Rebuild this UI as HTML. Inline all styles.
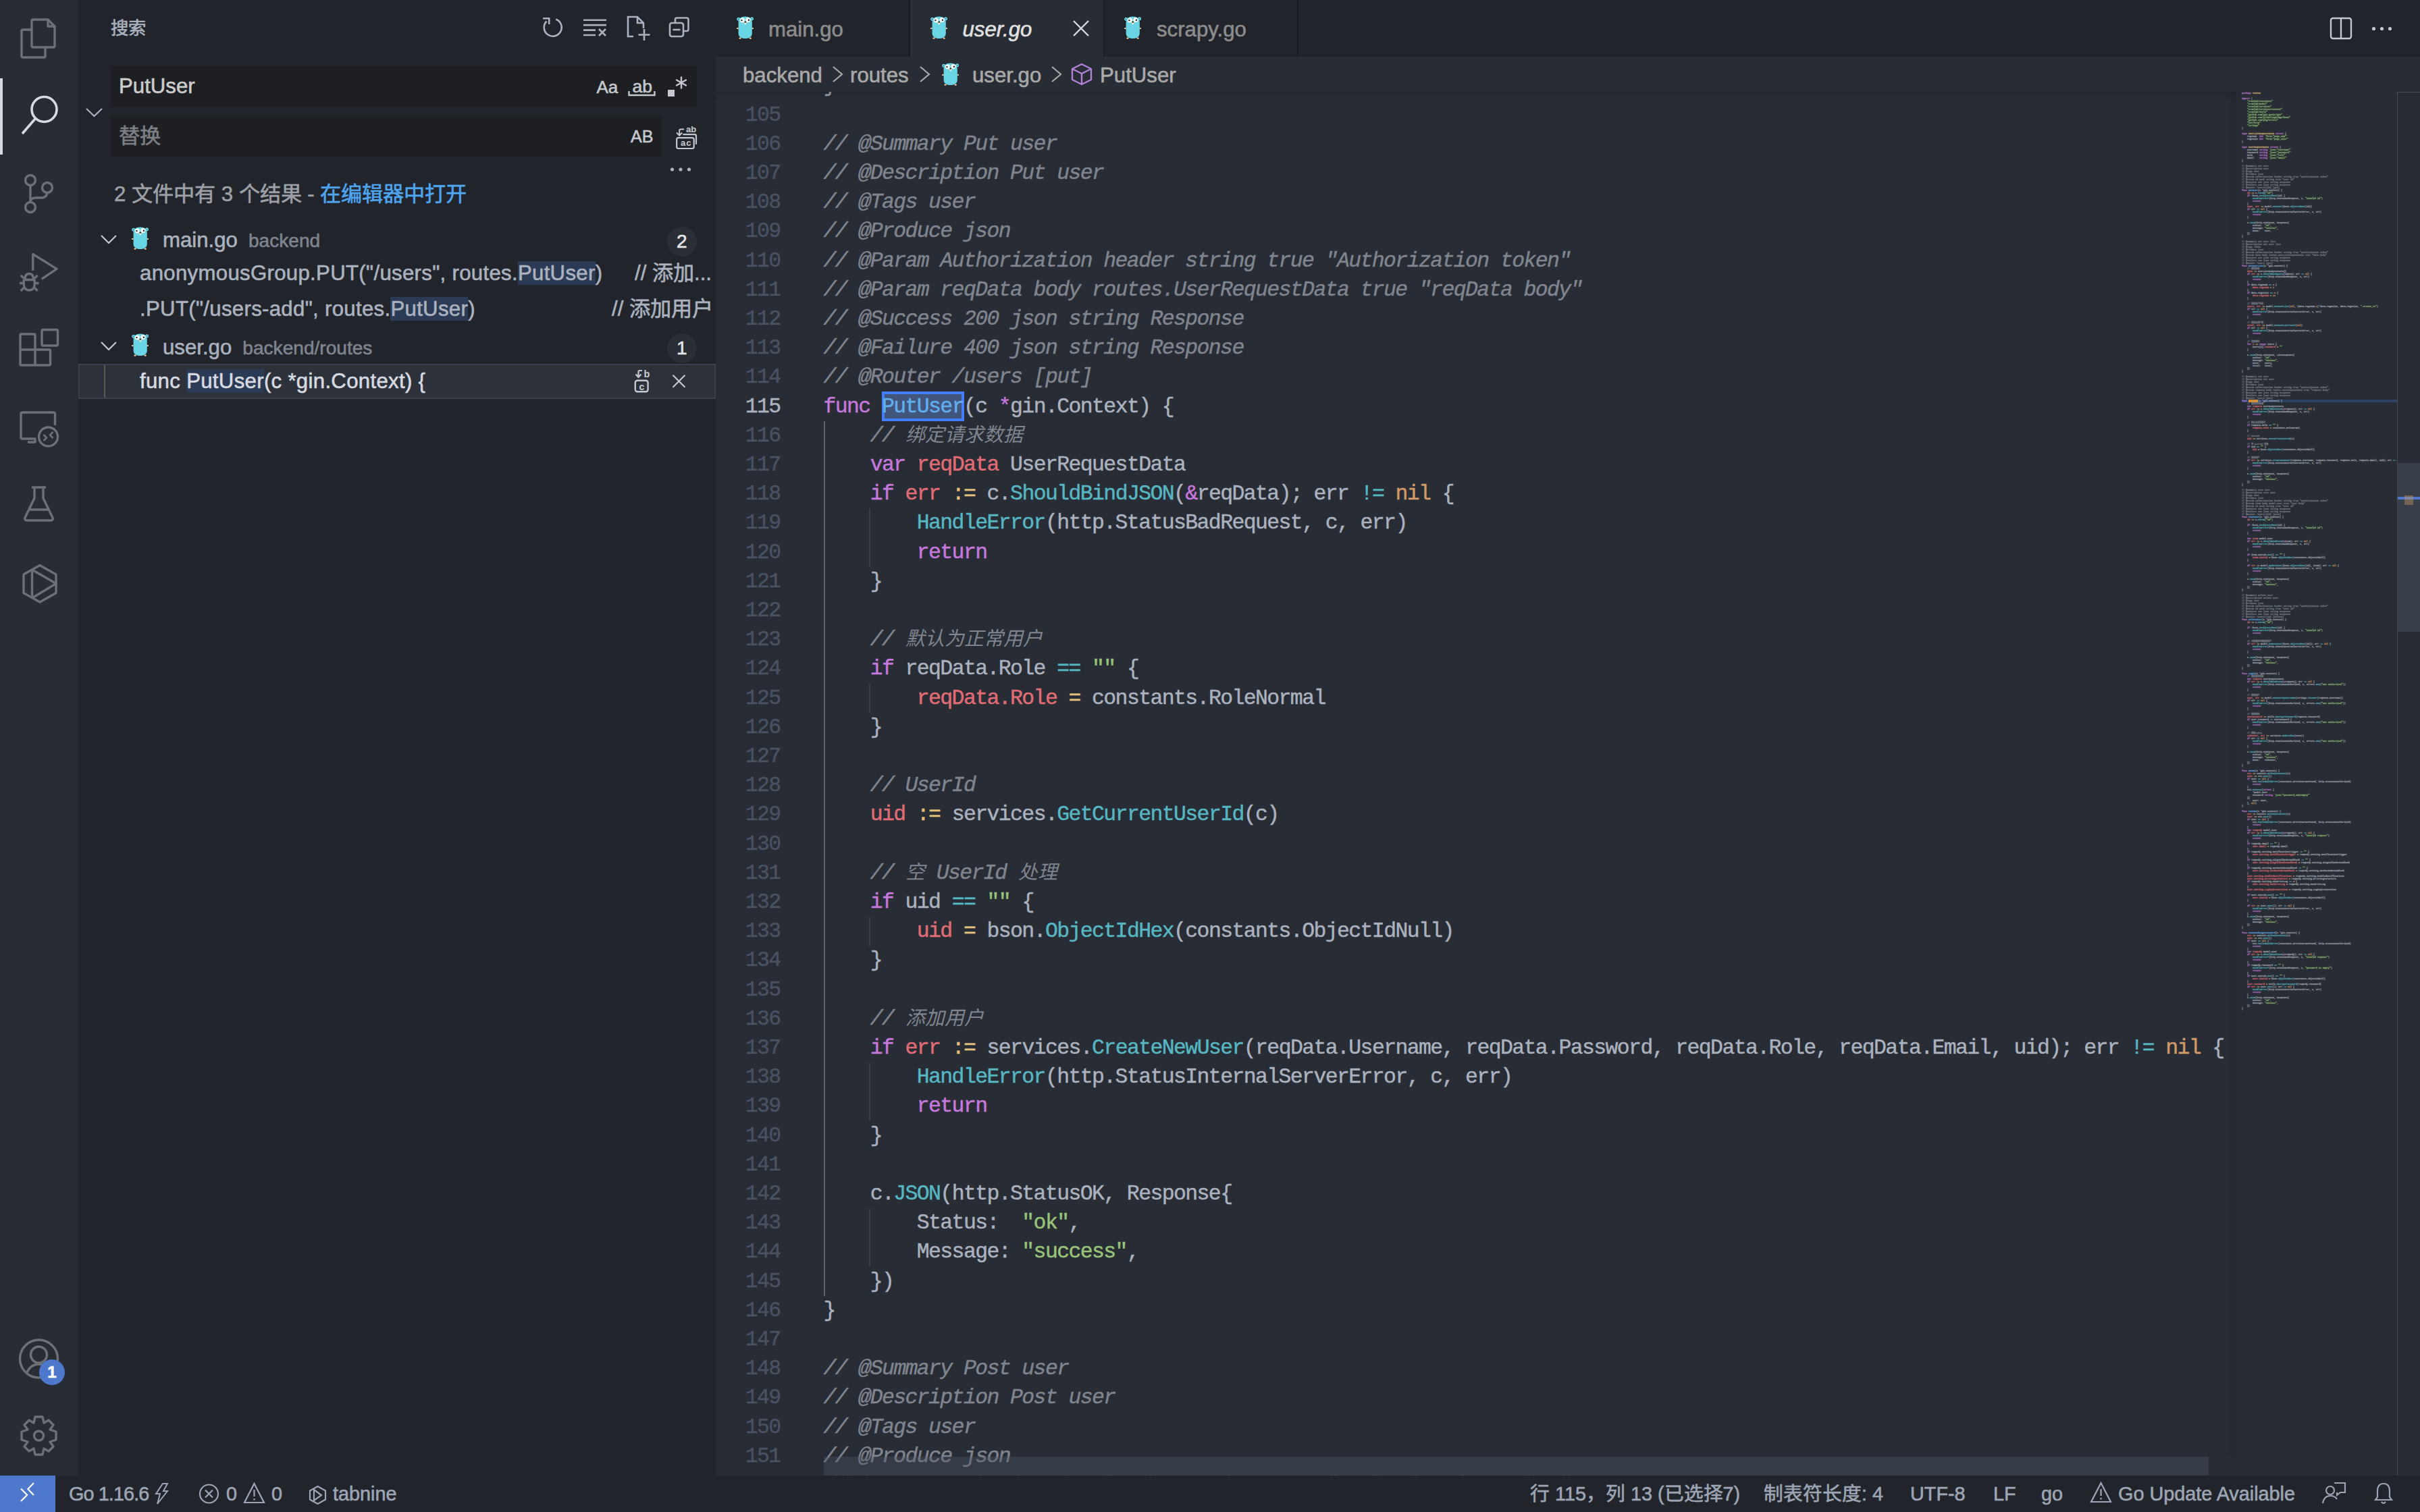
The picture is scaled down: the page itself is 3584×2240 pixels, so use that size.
<!DOCTYPE html>
<html lang="zh-CN"><head><meta charset="utf-8">
<style>
html,body{margin:0;padding:0;width:3584px;height:2240px;overflow:hidden;background:#282c34;font-family:"Liberation Sans",sans-serif;-webkit-text-stroke:0.6px}
.abs{position:absolute}
svg{display:block;overflow:visible}
#act{position:absolute;left:0;top:0;width:116px;height:2186px;background:#282c34}
#side{position:absolute;left:116px;top:0;width:944px;height:2186px;background:#21252b;overflow:hidden}
#tabs{position:absolute;left:1060px;top:0;width:2524px;height:84px;background:#21252b}
#crumbs{position:absolute;left:1060px;top:84px;width:2524px;height:52px;background:#282c34}
#editor{position:absolute;left:1060px;top:136px;width:2524px;height:2050px;background:#282c34;overflow:hidden}
#status{position:absolute;left:0;top:2186px;width:3584px;height:54px;background:#21252b;color:#9da5b4;font-size:28.8px}
.ln{position:absolute;left:1219.5px;height:43.2px;line-height:43.2px;font-family:"Liberation Mono",monospace;font-size:31.5px;letter-spacing:-1.62px;-webkit-text-stroke:0.45px;white-space:pre;color:#abb2bf}
.num{position:absolute;left:1060px;width:95.6px;text-align:right;height:43.2px;line-height:43.2px;font-family:"Liberation Mono",monospace;font-size:31.5px;letter-spacing:-1.62px;-webkit-text-stroke:0.45px;color:#495162}
.num.act{color:#abb2bf}
.ln i{color:#7f848e;font-style:italic}
.cj{font-size:28.8px;letter-spacing:0;-webkit-text-stroke:0}
.k{color:#c678dd}.v{color:#e06c75}.f{color:#56b6c2}.d{color:#61afef}.o{color:#56b6c2}.a{color:#e5c07b}.s{color:#98c379}.n{color:#d19a66}.y{color:#e5c07b}

.ig{position:absolute;width:2px;background:#3b4048}
.ig.act{background:#5c6270}
.tab{position:absolute;top:0;height:84px;width:286px;border-right:2px solid #181a1f;background:#21252b}
.tab .t{position:absolute;left:78px;top:2px;line-height:84px;font-size:31.2px;color:#8c8c8c}
.tab.active{background:#282c34}
.tab.active .t{color:#e0e0e0;font-style:italic}
.crumb{position:absolute;top:86px;height:52px;line-height:52px;font-size:31.2px;color:#a9a9a9}
.sb{position:absolute;top:2186px;height:54px;line-height:54px;font-size:28.8px;color:#9da5b4;white-space:nowrap}
.tree{position:absolute;height:52.8px;line-height:52.8px;font-size:31.2px;color:#abb2bf;white-space:pre}
.tree.code{letter-spacing:0.3px}
.desc{color:#7f848e;font-size:28.1px;margin-left:16px}
.mh{background:#2b3a55}
.mm{font-family:"Liberation Mono",monospace;font-size:3.333px;line-height:4px;white-space:pre;color:#abb2bf;-webkit-text-stroke:0.3px;opacity:0.75}
.mm .c{color:#7f848e}
.badge{position:absolute;width:44px;height:44px;border-radius:22px;background:#2a2e36;color:#e6e6e6;font-size:28px;line-height:44px;text-align:center}
</style></head><body>

<!-- ACTIVITY BAR -->
<div id="act">
<svg class="abs" style="left:0;top:0" width="116" height="2186" viewBox="0 0 116 2186" fill="none" stroke="#6c7079" stroke-width="3.4" stroke-linejoin="round">
 <!-- explorer -->
 <path d="M49 29 H71 L81 39 V68 Q81 70 79 70 H49 Q47 70 47 68 V31 Q47 29 49 29 Z"/>
 <path d="M71 29 V39 H81"/>
 <path d="M47 44 H34 Q32 44 32 46 V83 Q32 85 34 85 H65 Q67 85 67 83 V70"/>
 <!-- search (active) -->
 <g stroke="#d7dae0" stroke-width="3.6">
 <circle cx="65.5" cy="162" r="18.5"/>
 <path d="M52.5 175.5 L33 198"/>
 </g>
 <rect x="0" y="116" width="4" height="113" fill="#d7dae0" stroke="none"/>
 <!-- scm -->
 <circle cx="45" cy="267" r="7.5"/>
 <circle cx="45" cy="307" r="7.5"/>
 <circle cx="70" cy="278" r="7.5"/>
 <path d="M45 274.5 V299.5"/>
 <path d="M70 285.5 Q69 293 61 293 H53 Q45 293 45 299.5"/>
 <!-- run & debug -->
 <path d="M48.8 400.7 V376.5 L84 398.4 L61.8 413.4"/>
 <path d="M37 413.5 Q37 405.5 43.2 405.5 Q49.4 405.5 49.4 413.5 M34.5 414.5 H52 M35.2 414.5 V421 Q35.2 430 43.2 430 Q51.2 430 51.2 421 V414.5"/>
 <path d="M30.8 408 L35.5 412.5 M55.6 408 L50.9 412.5 M29 419.5 H34.5 M52 419.5 H57.5 M30.8 431 L35.3 426.2 M55.6 431 L51.1 426.2"/>
 <!-- extensions -->
 <path d="M31.5 495 H50.5 Q52 495 52 496.5 V518 H73 Q74.5 518 74.5 519.5 V539.5 Q74.5 541 73 541 H31.5 Q30 541 30 539.5 V496.5 Q30 495 31.5 495 Z"/>
 <path d="M30 518 H52 V541"/>
 <rect x="62" y="488.5" width="23.5" height="23.5" rx="2"/>
 <!-- remote -->
 <path d="M81.5 630 V613 Q81.5 611 79.5 611 H33 Q31 611 31 613 V648 Q31 650 33 650 H52 V655 H41"/>
 <circle cx="71.5" cy="647" r="14"/>
 <path d="M64.5 644 L69 648.5 L64.5 653 M78.5 640 L74 644.5 L78.5 649" stroke-width="2.6"/>
 <!-- testing -->
 <path d="M47 722 H68 M51 722 V738 L37 767 Q36 771 40 771 H75 Q79 771 78 767 L64 738 V722 M43 755 H72"/>
 <!-- hexagon play -->
 <path d="M59 837.5 L83 851 V878.5 L59 892 L35 878.5 V851 Z"/>
 <path d="M47.5 844 V886 M47.5 844 L83 864.5 L47.5 886"/>
 <!-- account -->
 <circle cx="57.5" cy="2013" r="28"/>
 <circle cx="57.5" cy="2007" r="12"/>
 <path d="M40 2033 Q46 2021 57.5 2021 Q69 2021 75 2033"/>
 <!-- gear -->
 <path d="M52 2099 H63 L65 2108 L72 2104 L79 2111 L74 2118 L83 2121 V2133 L74 2136 L79 2143 L72 2150 L65 2146 L63 2155 H52 L50 2146 L43 2150 L36 2143 L41 2136 L32 2133 V2121 L41 2118 L36 2111 L43 2104 L50 2108 Z"/>
 <circle cx="57.5" cy="2127" r="7"/>
</svg>
<div class="abs" style="left:58px;top:2014px;width:38px;height:38px;border-radius:19px;background:#4d78cc;color:#fff;font-weight:bold;font-size:24px;line-height:38px;text-align:center">1</div>
</div>

<!-- SIDEBAR -->
<div id="side">
 <div class="abs" style="left:48px;top:0;line-height:84px;font-size:26.4px;color:#abb2bf">搜索</div>
 <div class="abs" style="left:48px;top:98px;width:868px;height:60px;background:#1d1f23"></div>
 <div class="abs" style="left:60px;top:98px;line-height:60px;font-size:31.2px;color:#cccccc">PutUser</div>
 <div class="abs" style="left:767.5px;top:99px;line-height:60px;font-size:26px;color:#c5c8ce">Aa</div>
 <div class="abs" style="left:820.5px;top:97.5px;line-height:60px;font-size:26.5px;color:#c5c8ce">ab</div>
 <div class="abs" style="left:872.5px;top:133px;width:10px;height:10px;background:#c5c8ce"></div>
  <div class="abs" style="left:48px;top:172px;width:816px;height:60px;background:#1d1f23"></div>
 <div class="abs" style="left:60px;top:172px;line-height:60px;font-size:31.2px;color:#7d7f84">替换</div>
 <div class="abs" style="left:818px;top:172px;line-height:60px;font-size:25px;color:#c5c8ce">AB</div>
 <div class="abs" style="left:53px;top:262px;line-height:52px;font-size:31.2px;color:#9da0a6;white-space:pre">2 文件中有 3 个结果 - <span style="color:#4fa6ef">在编辑器中打开</span></div>
 <svg class="abs" style="left:0;top:0" width="944" height="700" viewBox="116 0 944 700" fill="none" stroke="#abb2bf" stroke-width="2.6">
  <!-- refresh -->
  <path d="M823.3 28.5 A13 13 0 1 1 809.5 31.5"/>
  <path d="M804.1 27.2 H813.2 V36" stroke-linejoin="miter"/>
  <path d="M1009 113.5 V131.5 M1001.2 118 L1016.8 127 M1016.8 118 L1001.2 127" stroke="#c5c8ce" stroke-width="2.4"/>
  <!-- clear -->
  <path d="M864 29.8 H898 M864 37.1 H898 M864 44.6 H882 M864 52 H882 M887 43 L897 53 M897 43 L887 53"/>
  <!-- new search editor -->
  <path d="M938 54 H930 V25 H944 L953 34 V42 M944 25 V34 H953 M954 43 V60 M945.5 51.5 H962.5"/>
  <!-- collapse all -->
  <rect x="992" y="34" width="20" height="20" rx="3"/>
  <path d="M1000 34 V29 Q1000 26.5 1002.5 26.5 H1017 Q1019.5 26.5 1019.5 29 V43.5 Q1019.5 46 1017 46 H1012"/>
  <path d="M996.5 44 H1007.5"/>
  <!-- toggle chevron -->
  <path d="M128 161 L139.5 172 L151 161" stroke-width="2.2"/>
  <g stroke="#c5c8ce">
  <!-- ab underline -->
  <path d="M931.5 135 V141 H969.5 V135" stroke-width="2.4"/>
  <!-- replace all -->
  <rect x="1002.2" y="204.1" width="25.5" height="15.9" rx="2.5" stroke-width="2.2"/>
  <path d="M1011.2 199.2 H1029 Q1031 199.2 1031 201.2 V213.7" stroke-width="2.2"/>
  <path d="M1013.1 191.6 H1008.2 Q1006.2 191.6 1006.2 193.6 V200 M1002 196.5 L1006.2 200.8 L1010.2 196.5" stroke-width="2"/>
  <!-- more dots -->
  <g fill="#abb2bf" stroke="none"><circle cx="995.5" cy="251" r="2.6"/><circle cx="1008" cy="251" r="2.6"/><circle cx="1020.5" cy="251" r="2.6"/></g>
  </g>
 </svg>
 <div class="abs" style="left:900px;top:185px;line-height:14px;font-size:13px;font-weight:bold;-webkit-text-stroke:0.1px;color:#c5c8ce">ab</div>
 <div class="abs" style="left:892px;top:205px;line-height:14px;font-size:13px;font-weight:bold;-webkit-text-stroke:0.1px;color:#c5c8ce;letter-spacing:1px">ac</div>

 <!-- tree -->
 <svg class="abs" style="left:0;top:0" width="944" height="700" viewBox="116 0 944 700" fill="none" stroke="#c5c8ce" stroke-width="2.2">
  <path d="M150 349 L161 360 L172 349"/>
  <path d="M150 507 L161 518 L172 507"/>
 </svg>
 <div class="abs" style="left:78.9px;top:336px;width:24px;height:34px"><svg viewBox="0 0 24 34" width="24" height="34">
<circle cx="2.7" cy="4.2" r="2.5" fill="#6ad6e5"/><circle cx="22.6" cy="3.8" r="2.5" fill="#6ad6e5"/>
<circle cx="2.4" cy="4.2" r="0.7" fill="#1b3a40"/><circle cx="22.9" cy="3.8" r="0.7" fill="#1b3a40"/>
<ellipse cx="1.4" cy="18.1" rx="1.5" ry="1.1" fill="#f3d0a0"/><ellipse cx="23.6" cy="18.1" rx="1.5" ry="1.1" fill="#f3d0a0"/>
<ellipse cx="5" cy="32.6" rx="1.7" ry="1.2" fill="#f3d0a0"/><ellipse cx="20.2" cy="32.6" rx="1.7" ry="1.2" fill="#f3d0a0"/>
<path d="M12.6 0.6 C19 0.6 22.8 3.6 22.8 9.5 V25 C22.8 30.5 18.8 33 12.6 33 C6.4 33 2.6 30.5 2.6 25 V9.5 C2.6 3.6 6.2 0.6 12.6 0.6 Z" fill="#6ad6e5"/>
<circle cx="8.4" cy="5.9" r="3.5" fill="#fff"/><circle cx="16.9" cy="5.6" r="3.5" fill="#fff"/>
<circle cx="7.4" cy="6.1" r="1.2" fill="#222"/><circle cx="17.9" cy="5.8" r="1.2" fill="#222"/>
<ellipse cx="12.8" cy="9.9" rx="2.2" ry="1.1" fill="#f3d0a0"/><ellipse cx="12.8" cy="8.5" rx="1.3" ry="0.95" fill="#111"/>
<rect x="12" y="10.8" width="1.7" height="1.5" fill="#fff"/>
</svg></div>
 <div class="tree" style="left:125px;top:330px">main.go<span class="desc">backend</span></div>
 <div class="badge" style="left:871.7px;top:336px">2</div>
 <div class="tree code" style="left:91px;top:379.4px">anonymousGroup.PUT("/users", routes.<span class="mh">PutUser</span>)</div>
 <div class="tree" style="left:824px;top:379.4px">// 添加...</div>
 <div class="tree code" style="left:91px;top:432.2px">.PUT("/users-add", routes.<span class="mh">PutUser</span>)</div>
 <div class="tree" style="left:790px;top:432.2px">// 添加用户</div>
 <div class="abs" style="left:78.9px;top:493.5px;width:24px;height:34px"><svg viewBox="0 0 24 34" width="24" height="34">
<circle cx="2.7" cy="4.2" r="2.5" fill="#6ad6e5"/><circle cx="22.6" cy="3.8" r="2.5" fill="#6ad6e5"/>
<circle cx="2.4" cy="4.2" r="0.7" fill="#1b3a40"/><circle cx="22.9" cy="3.8" r="0.7" fill="#1b3a40"/>
<ellipse cx="1.4" cy="18.1" rx="1.5" ry="1.1" fill="#f3d0a0"/><ellipse cx="23.6" cy="18.1" rx="1.5" ry="1.1" fill="#f3d0a0"/>
<ellipse cx="5" cy="32.6" rx="1.7" ry="1.2" fill="#f3d0a0"/><ellipse cx="20.2" cy="32.6" rx="1.7" ry="1.2" fill="#f3d0a0"/>
<path d="M12.6 0.6 C19 0.6 22.8 3.6 22.8 9.5 V25 C22.8 30.5 18.8 33 12.6 33 C6.4 33 2.6 30.5 2.6 25 V9.5 C2.6 3.6 6.2 0.6 12.6 0.6 Z" fill="#6ad6e5"/>
<circle cx="8.4" cy="5.9" r="3.5" fill="#fff"/><circle cx="16.9" cy="5.6" r="3.5" fill="#fff"/>
<circle cx="7.4" cy="6.1" r="1.2" fill="#222"/><circle cx="17.9" cy="5.8" r="1.2" fill="#222"/>
<ellipse cx="12.8" cy="9.9" rx="2.2" ry="1.1" fill="#f3d0a0"/><ellipse cx="12.8" cy="8.5" rx="1.3" ry="0.95" fill="#111"/>
<rect x="12" y="10.8" width="1.7" height="1.5" fill="#fff"/>
</svg></div>
 <div class="tree" style="left:125px;top:488.5px">user.go<span class="desc">backend/routes</span></div>
 <div class="badge" style="left:871.7px;top:493.5px">1</div>
 <div class="abs" style="left:0;top:538.8px;width:940px;height:48.6px;background:#2c313a;border:2px solid #3a3f4b"></div>
 <div class="abs" style="left:38px;top:540.8px;width:2px;height:48.6px;background:#5a5a52"></div>
 <div class="tree code" style="left:91px;top:538.8px;color:#d7dae0">func <span class="mh">PutUser</span>(c *gin.Context) {</div>
 <svg class="abs" style="left:0;top:0" width="944" height="700" viewBox="116 0 944 700" fill="none" stroke="#c5c8ce" stroke-width="2.4">
  <rect x="940.8" y="563.7" width="18.8" height="16.6" rx="3"/>
  <path d="M951 549 H947 Q945.5 549 945.5 550.5 V558.5 M941.5 554.5 L945.5 558.8 L949.5 554.5" stroke-width="2.2"/>
  <path d="M996.5 555.8 L1014.5 573.8 M1014.5 555.8 L996.5 573.8" stroke-width="2.2"/>
 </svg>
 <div class="abs" style="left:837.5px;top:548px;line-height:12px;font-size:14.5px;font-weight:bold;-webkit-text-stroke:0.1px;color:#c5c8ce">b</div>
 <div class="abs" style="left:830.5px;top:566px;line-height:14px;font-size:14px;font-weight:bold;-webkit-text-stroke:0.1px;color:#c5c8ce">c</div>
</div>

<!-- TABS -->
<div id="tabs">
 <div class="tab" style="left:0"><div class="t">main.go</div></div>
 <div class="tab active" style="left:287.5px"><div class="t">user.go</div></div>
 <div class="tab" style="left:575px"><div class="t">scrapy.go</div></div>
 <svg class="abs" style="left:0;top:0" width="2524" height="84" viewBox="1060 0 2524 84" fill="none" stroke="#d7dae0" stroke-width="2.4">
  <path d="M1590 31 L1612 53 M1612 31 L1590 53"/>
  <rect x="3452" y="27" width="30" height="30" rx="3" stroke="#c5c8ce"/>
  <path d="M3467 27 V57" stroke="#c5c8ce"/>
  <g fill="#c5c8ce" stroke="none"><circle cx="3515.5" cy="42.5" r="2.6"/><circle cx="3527.5" cy="42.5" r="2.6"/><circle cx="3539.5" cy="42.5" r="2.6"/></g>
 </svg>
</div>
<div class="abs" style="left:1090.8px;top:23.9px;width:24px;height:34px"><svg viewBox="0 0 24 34" width="24" height="34">
<circle cx="2.7" cy="4.2" r="2.5" fill="#6ad6e5"/><circle cx="22.6" cy="3.8" r="2.5" fill="#6ad6e5"/>
<circle cx="2.4" cy="4.2" r="0.7" fill="#1b3a40"/><circle cx="22.9" cy="3.8" r="0.7" fill="#1b3a40"/>
<ellipse cx="1.4" cy="18.1" rx="1.5" ry="1.1" fill="#f3d0a0"/><ellipse cx="23.6" cy="18.1" rx="1.5" ry="1.1" fill="#f3d0a0"/>
<ellipse cx="5" cy="32.6" rx="1.7" ry="1.2" fill="#f3d0a0"/><ellipse cx="20.2" cy="32.6" rx="1.7" ry="1.2" fill="#f3d0a0"/>
<path d="M12.6 0.6 C19 0.6 22.8 3.6 22.8 9.5 V25 C22.8 30.5 18.8 33 12.6 33 C6.4 33 2.6 30.5 2.6 25 V9.5 C2.6 3.6 6.2 0.6 12.6 0.6 Z" fill="#6ad6e5"/>
<circle cx="8.4" cy="5.9" r="3.5" fill="#fff"/><circle cx="16.9" cy="5.6" r="3.5" fill="#fff"/>
<circle cx="7.4" cy="6.1" r="1.2" fill="#222"/><circle cx="17.9" cy="5.8" r="1.2" fill="#222"/>
<ellipse cx="12.8" cy="9.9" rx="2.2" ry="1.1" fill="#f3d0a0"/><ellipse cx="12.8" cy="8.5" rx="1.3" ry="0.95" fill="#111"/>
<rect x="12" y="10.8" width="1.7" height="1.5" fill="#fff"/>
</svg></div>
<div class="abs" style="left:1377.8px;top:23.9px;width:24px;height:34px"><svg viewBox="0 0 24 34" width="24" height="34">
<circle cx="2.7" cy="4.2" r="2.5" fill="#6ad6e5"/><circle cx="22.6" cy="3.8" r="2.5" fill="#6ad6e5"/>
<circle cx="2.4" cy="4.2" r="0.7" fill="#1b3a40"/><circle cx="22.9" cy="3.8" r="0.7" fill="#1b3a40"/>
<ellipse cx="1.4" cy="18.1" rx="1.5" ry="1.1" fill="#f3d0a0"/><ellipse cx="23.6" cy="18.1" rx="1.5" ry="1.1" fill="#f3d0a0"/>
<ellipse cx="5" cy="32.6" rx="1.7" ry="1.2" fill="#f3d0a0"/><ellipse cx="20.2" cy="32.6" rx="1.7" ry="1.2" fill="#f3d0a0"/>
<path d="M12.6 0.6 C19 0.6 22.8 3.6 22.8 9.5 V25 C22.8 30.5 18.8 33 12.6 33 C6.4 33 2.6 30.5 2.6 25 V9.5 C2.6 3.6 6.2 0.6 12.6 0.6 Z" fill="#6ad6e5"/>
<circle cx="8.4" cy="5.9" r="3.5" fill="#fff"/><circle cx="16.9" cy="5.6" r="3.5" fill="#fff"/>
<circle cx="7.4" cy="6.1" r="1.2" fill="#222"/><circle cx="17.9" cy="5.8" r="1.2" fill="#222"/>
<ellipse cx="12.8" cy="9.9" rx="2.2" ry="1.1" fill="#f3d0a0"/><ellipse cx="12.8" cy="8.5" rx="1.3" ry="0.95" fill="#111"/>
<rect x="12" y="10.8" width="1.7" height="1.5" fill="#fff"/>
</svg></div>
<div class="abs" style="left:1664.8px;top:23.9px;width:24px;height:34px"><svg viewBox="0 0 24 34" width="24" height="34">
<circle cx="2.7" cy="4.2" r="2.5" fill="#6ad6e5"/><circle cx="22.6" cy="3.8" r="2.5" fill="#6ad6e5"/>
<circle cx="2.4" cy="4.2" r="0.7" fill="#1b3a40"/><circle cx="22.9" cy="3.8" r="0.7" fill="#1b3a40"/>
<ellipse cx="1.4" cy="18.1" rx="1.5" ry="1.1" fill="#f3d0a0"/><ellipse cx="23.6" cy="18.1" rx="1.5" ry="1.1" fill="#f3d0a0"/>
<ellipse cx="5" cy="32.6" rx="1.7" ry="1.2" fill="#f3d0a0"/><ellipse cx="20.2" cy="32.6" rx="1.7" ry="1.2" fill="#f3d0a0"/>
<path d="M12.6 0.6 C19 0.6 22.8 3.6 22.8 9.5 V25 C22.8 30.5 18.8 33 12.6 33 C6.4 33 2.6 30.5 2.6 25 V9.5 C2.6 3.6 6.2 0.6 12.6 0.6 Z" fill="#6ad6e5"/>
<circle cx="8.4" cy="5.9" r="3.5" fill="#fff"/><circle cx="16.9" cy="5.6" r="3.5" fill="#fff"/>
<circle cx="7.4" cy="6.1" r="1.2" fill="#222"/><circle cx="17.9" cy="5.8" r="1.2" fill="#222"/>
<ellipse cx="12.8" cy="9.9" rx="2.2" ry="1.1" fill="#f3d0a0"/><ellipse cx="12.8" cy="8.5" rx="1.3" ry="0.95" fill="#111"/>
<rect x="12" y="10.8" width="1.7" height="1.5" fill="#fff"/>
</svg></div>

<!-- BREADCRUMBS -->
<div id="crumbs"></div>
<div class="crumb" style="left:1100px">backend</div>
<div class="crumb" style="left:1259px">routes</div>
<div class="abs" style="left:1395px;top:92.6px;width:24px;height:34px"><svg viewBox="0 0 24 34" width="24" height="34">
<circle cx="2.7" cy="4.2" r="2.5" fill="#6ad6e5"/><circle cx="22.6" cy="3.8" r="2.5" fill="#6ad6e5"/>
<circle cx="2.4" cy="4.2" r="0.7" fill="#1b3a40"/><circle cx="22.9" cy="3.8" r="0.7" fill="#1b3a40"/>
<ellipse cx="1.4" cy="18.1" rx="1.5" ry="1.1" fill="#f3d0a0"/><ellipse cx="23.6" cy="18.1" rx="1.5" ry="1.1" fill="#f3d0a0"/>
<ellipse cx="5" cy="32.6" rx="1.7" ry="1.2" fill="#f3d0a0"/><ellipse cx="20.2" cy="32.6" rx="1.7" ry="1.2" fill="#f3d0a0"/>
<path d="M12.6 0.6 C19 0.6 22.8 3.6 22.8 9.5 V25 C22.8 30.5 18.8 33 12.6 33 C6.4 33 2.6 30.5 2.6 25 V9.5 C2.6 3.6 6.2 0.6 12.6 0.6 Z" fill="#6ad6e5"/>
<circle cx="8.4" cy="5.9" r="3.5" fill="#fff"/><circle cx="16.9" cy="5.6" r="3.5" fill="#fff"/>
<circle cx="7.4" cy="6.1" r="1.2" fill="#222"/><circle cx="17.9" cy="5.8" r="1.2" fill="#222"/>
<ellipse cx="12.8" cy="9.9" rx="2.2" ry="1.1" fill="#f3d0a0"/><ellipse cx="12.8" cy="8.5" rx="1.3" ry="0.95" fill="#111"/>
<rect x="12" y="10.8" width="1.7" height="1.5" fill="#fff"/>
</svg></div>
<div class="crumb" style="left:1440px">user.go</div>
<div class="crumb" style="left:1629px">PutUser</div>
<svg class="abs" style="left:0;top:0" width="3584" height="140" fill="none" stroke="#a9a9a9" stroke-width="2.2">
 <path d="M1234 99 L1247 110 L1234 121 M1363 99 L1376 110 L1363 121 M1558 99 L1571 110 L1558 121"/>
 <g stroke="#b180d7" stroke-width="2.4" stroke-linejoin="round"><path d="M1602 95 L1616 102 V118 L1602 125 L1588 118 V102 Z M1588 102 L1602 109 L1616 102 M1602 109 V125"/></g>
</svg>

<!-- EDITOR -->
<div id="editor"></div>
<div class="abs" style="left:1060px;top:136px;width:2252px;height:2050px;overflow:hidden">
 <div class="abs" style="left:-1060px;top:-136px;width:3584px;height:2240px">
<div class="abs" style="left:1306px;top:580px;width:122px;height:44px;box-sizing:border-box;background:#42557b;border:4px solid #457dff"></div>
<div class="ig act" style="left:1219.5px;top:623.7px;height:1296.0px"></div>
<div class="ig" style="left:1287.4px;top:753.3px;height:86.4px"></div>
<div class="ig" style="left:1287.4px;top:1012.5px;height:43.2px"></div>
<div class="ig" style="left:1287.4px;top:1358.1px;height:43.2px"></div>
<div class="ig" style="left:1287.4px;top:1574.1px;height:86.4px"></div>
<div class="ig" style="left:1287.4px;top:1790.1px;height:86.4px"></div>
<div class="ln" style="top:105.3px">}</div>
<div class="num" style="top:105.3px">104</div>
<div class="ln" style="top:148.5px"></div>
<div class="num" style="top:148.5px">105</div>
<div class="ln" style="top:191.7px"><i>// @Summary Put user</i></div>
<div class="num" style="top:191.7px">106</div>
<div class="ln" style="top:234.9px"><i>// @Description Put user</i></div>
<div class="num" style="top:234.9px">107</div>
<div class="ln" style="top:278.1px"><i>// @Tags user</i></div>
<div class="num" style="top:278.1px">108</div>
<div class="ln" style="top:321.3px"><i>// @Produce json</i></div>
<div class="num" style="top:321.3px">109</div>
<div class="ln" style="top:364.5px"><i>// @Param Authorization header string true &quot;Authorization token&quot;</i></div>
<div class="num" style="top:364.5px">110</div>
<div class="ln" style="top:407.7px"><i>// @Param reqData body routes.UserRequestData true &quot;reqData body&quot;</i></div>
<div class="num" style="top:407.7px">111</div>
<div class="ln" style="top:450.9px"><i>// @Success 200 json string Response</i></div>
<div class="num" style="top:450.9px">112</div>
<div class="ln" style="top:494.1px"><i>// @Failure 400 json string Response</i></div>
<div class="num" style="top:494.1px">113</div>
<div class="ln" style="top:537.3px"><i>// @Router /users [put]</i></div>
<div class="num" style="top:537.3px">114</div>
<div class="ln" style="top:580.5px"><span class="k">func</span> <span class="d sel">PutUser</span>(c <span class="k">*</span>gin.Context) {</div>
<div class="num act" style="top:580.5px">115</div>
<div class="ln" style="top:623.7px">    <i>// <span class="cj">绑定请求数据</span></i></div>
<div class="num" style="top:623.7px">116</div>
<div class="ln" style="top:666.9px">    <span class="k">var</span> <span class="v">reqData</span> UserRequestData</div>
<div class="num" style="top:666.9px">117</div>
<div class="ln" style="top:710.1px">    <span class="k">if</span> <span class="v">err</span> <span class="a">:=</span> c.<span class="f">ShouldBindJSON</span>(<span class="k">&amp;</span>reqData); err <span class="o">!=</span> <span class="n">nil</span> {</div>
<div class="num" style="top:710.1px">118</div>
<div class="ln" style="top:753.3px">        <span class="f">HandleError</span>(http.StatusBadRequest, c, err)</div>
<div class="num" style="top:753.3px">119</div>
<div class="ln" style="top:796.5px">        <span class="k">return</span></div>
<div class="num" style="top:796.5px">120</div>
<div class="ln" style="top:839.7px">    }</div>
<div class="num" style="top:839.7px">121</div>
<div class="ln" style="top:882.9px"></div>
<div class="num" style="top:882.9px">122</div>
<div class="ln" style="top:926.1px">    <i>// <span class="cj">默认为正常用户</span></i></div>
<div class="num" style="top:926.1px">123</div>
<div class="ln" style="top:969.3px">    <span class="k">if</span> reqData.Role <span class="o">==</span> <span class="s">&quot;&quot;</span> {</div>
<div class="num" style="top:969.3px">124</div>
<div class="ln" style="top:1012.5px">        <span class="v">reqData.Role</span> <span class="a">=</span> constants.RoleNormal</div>
<div class="num" style="top:1012.5px">125</div>
<div class="ln" style="top:1055.7px">    }</div>
<div class="num" style="top:1055.7px">126</div>
<div class="ln" style="top:1098.9px"></div>
<div class="num" style="top:1098.9px">127</div>
<div class="ln" style="top:1142.1px">    <i>// UserId</i></div>
<div class="num" style="top:1142.1px">128</div>
<div class="ln" style="top:1185.3px">    <span class="v">uid</span> <span class="a">:=</span> services.<span class="f">GetCurrentUserId</span>(c)</div>
<div class="num" style="top:1185.3px">129</div>
<div class="ln" style="top:1228.5px"></div>
<div class="num" style="top:1228.5px">130</div>
<div class="ln" style="top:1271.7px">    <i>// <span class="cj">空</span> UserId <span class="cj">处理</span></i></div>
<div class="num" style="top:1271.7px">131</div>
<div class="ln" style="top:1314.9px">    <span class="k">if</span> uid <span class="o">==</span> <span class="s">&quot;&quot;</span> {</div>
<div class="num" style="top:1314.9px">132</div>
<div class="ln" style="top:1358.1px">        <span class="v">uid</span> <span class="a">=</span> bson.<span class="f">ObjectIdHex</span>(constants.ObjectIdNull)</div>
<div class="num" style="top:1358.1px">133</div>
<div class="ln" style="top:1401.3px">    }</div>
<div class="num" style="top:1401.3px">134</div>
<div class="ln" style="top:1444.5px"></div>
<div class="num" style="top:1444.5px">135</div>
<div class="ln" style="top:1487.7px">    <i>// <span class="cj">添加用户</span></i></div>
<div class="num" style="top:1487.7px">136</div>
<div class="ln" style="top:1530.9px">    <span class="k">if</span> <span class="v">err</span> <span class="a">:=</span> services.<span class="f">CreateNewUser</span>(reqData.Username, reqData.Password, reqData.Role, reqData.Email, uid); err <span class="o">!=</span> <span class="n">nil</span> {</div>
<div class="num" style="top:1530.9px">137</div>
<div class="ln" style="top:1574.1px">        <span class="f">HandleError</span>(http.StatusInternalServerError, c, err)</div>
<div class="num" style="top:1574.1px">138</div>
<div class="ln" style="top:1617.3px">        <span class="k">return</span></div>
<div class="num" style="top:1617.3px">139</div>
<div class="ln" style="top:1660.5px">    }</div>
<div class="num" style="top:1660.5px">140</div>
<div class="ln" style="top:1703.7px"></div>
<div class="num" style="top:1703.7px">141</div>
<div class="ln" style="top:1746.9px">    c.<span class="f">JSON</span>(http.StatusOK, Response{</div>
<div class="num" style="top:1746.9px">142</div>
<div class="ln" style="top:1790.1px">        Status:  <span class="s">&quot;ok&quot;</span>,</div>
<div class="num" style="top:1790.1px">143</div>
<div class="ln" style="top:1833.3px">        Message: <span class="s">&quot;success&quot;</span>,</div>
<div class="num" style="top:1833.3px">144</div>
<div class="ln" style="top:1876.5px">    })</div>
<div class="num" style="top:1876.5px">145</div>
<div class="ln" style="top:1919.7px">}</div>
<div class="num" style="top:1919.7px">146</div>
<div class="ln" style="top:1962.9px"></div>
<div class="num" style="top:1962.9px">147</div>
<div class="ln" style="top:2006.1px"><i>// @Summary Post user</i></div>
<div class="num" style="top:2006.1px">148</div>
<div class="ln" style="top:2049.3px"><i>// @Description Post user</i></div>
<div class="num" style="top:2049.3px">149</div>
<div class="ln" style="top:2092.5px"><i>// @Tags user</i></div>
<div class="num" style="top:2092.5px">150</div>
<div class="ln" style="top:2135.7px"><i>// @Produce json</i></div>
<div class="num" style="top:2135.7px">151</div>
<div class="ln" style="top:2178.9px"><i>// @Param Authorization header string true &quot;Authorization token&quot;</i></div>
<div class="num" style="top:2178.9px">152</div>
 </div>
</div>
<div class="abs" style="left:1060px;top:136px;width:2252px;height:14px;background:linear-gradient(rgba(24,26,31,0.3),rgba(40,44,52,0))"></div>
<!-- minimap -->
<div class="abs" style="left:3320px;top:592px;width:230px;height:4px;background:#2d4163"></div>

<div class="abs" style="left:3312px;top:136px;width:238px;height:2050px;overflow:hidden">
<div class="mm" style="position:absolute;left:8px;top:0px"><span class="k">package</span> <span class="y">routes</span>

<span class="k">import</span> (
    <span class="s">&quot;crawlab/constants&quot;</span>
    <span class="s">&quot;crawlab/model&quot;</span>
    <span class="s">&quot;crawlab/services&quot;</span>
    <span class="s">&quot;crawlab/services/context&quot;</span>
    <span class="s">&quot;crawlab/utils&quot;</span>
    <span class="s">&quot;github.com/gin-gonic/gin&quot;</span>
    <span class="s">&quot;github.com/globalsign/mgo/bson&quot;</span>
    <span class="s">&quot;github.com/pkg/errors&quot;</span>
    <span class="s">&quot;net/http&quot;</span>
    <span class="s">&quot;strings&quot;</span>
)

<span class="k">type</span> <span class="y">UserListRequestData</span> <span class="k">struct</span> {
    PageNum  <span class="k">int</span> <span class="s">`form:&quot;page_num&quot;`</span>
    PageSize <span class="k">int</span> <span class="s">`form:&quot;page_size&quot;`</span>
}

<span class="k">type</span> <span class="y">UserRequestData</span> <span class="k">struct</span> {
    Username <span class="k">string</span> <span class="s">`json:&quot;username&quot;`</span>
    Password <span class="k">string</span> <span class="s">`json:&quot;password&quot;`</span>
    Role     <span class="k">string</span> <span class="s">`json:&quot;role&quot;`</span>
    Email    <span class="k">string</span> <span class="s">`json:&quot;email&quot;`</span>
}

<span class="c">// @Summary Get user</span>
<span class="c">// @Description user</span>
<span class="c">// @Tags user</span>
<span class="c">// @Produce json</span>
<span class="c">// @Param Authorization header string true &quot;Authorization token&quot;</span>
<span class="c">// @Param id path string true &quot;user id&quot;</span>
<span class="c">// @Success 200 json string Response</span>
<span class="c">// @Failure 400 json string Response</span>
<span class="c">// @Router /users/{id} [get]</span>
<span class="k">func</span> <span class="d">GetUser</span>(c <span class="k">*</span>gin.Context) {
    <span class="v">id</span> <span class="a">:=</span> c.<span class="f">Param</span>(<span class="s">&quot;id&quot;</span>)
    <span class="k">if</span> <span class="o">!</span>bson.<span class="f">IsObjectIdHex</span>(id) {
        <span class="f">HandleErrorF</span>(http.StatusBadRequest, c, <span class="s">&quot;invalid id&quot;</span>)
        <span class="k">return</span>
    }
    <span class="v">user</span>, <span class="v">err</span> <span class="a">:=</span> model.<span class="f">GetUser</span>(bson.<span class="f">ObjectIdHex</span>(id))
    <span class="k">if</span> err <span class="o">!=</span> <span class="n">nil</span> {
        <span class="f">HandleError</span>(http.StatusInternalServerError, c, err)
        <span class="k">return</span>
    }

    c.<span class="f">JSON</span>(http.StatusOK, Response{
        Status:  <span class="s">&quot;ok&quot;</span>,
        Message: <span class="s">&quot;success&quot;</span>,
        Data:    user,
    })
}

<span class="c">// @Summary Get user list</span>
<span class="c">// @Description Get user list</span>
<span class="c">// @Tags token</span>
<span class="c">// @Produce json</span>
<span class="c">// @Param Authorization header string true &quot;Authorization token&quot;</span>
<span class="c">// @Param data body routes.UserListRequestData true &quot;data body&quot;</span>
<span class="c">// @Success 200 json string Response</span>
<span class="c">// @Failure 400 json string Response</span>
<span class="c">// @Router /users [get]</span>
<span class="k">func</span> <span class="d">GetUserList</span>(c <span class="k">*</span>gin.Context) {
    <span class="c">// 绑定数据</span>
    <span class="v">data</span> <span class="a">:=</span> UserListRequestData{}
    <span class="k">if</span> <span class="v">err</span> <span class="a">:=</span> c.<span class="f">ShouldBindQuery</span>(<span class="k">&amp;</span>data); err <span class="o">!=</span> <span class="n">nil</span> {
        <span class="f">HandleError</span>(http.StatusBadRequest, c, err)
        <span class="k">return</span>
    }
    <span class="k">if</span> data.PageNum <span class="o">==</span> <span class="n">0</span> {
        <span class="v">data.PageNum</span> <span class="a">=</span> <span class="n">1</span>
    }
    <span class="k">if</span> data.PageSize <span class="o">==</span> <span class="n">0</span> {
        <span class="v">data.PageNum</span> <span class="a">=</span> <span class="n">10</span>
    }

    <span class="c">// 获取用户列表</span>
    <span class="v">users</span>, <span class="v">err</span> <span class="a">:=</span> model.<span class="f">GetUserList</span>(<span class="n">nil</span>, (data.PageNum<span class="o">-</span><span class="n">1</span>)<span class="o">*</span>data.PageSize, data.PageSize, <span class="s">&quot;-create_ts&quot;</span>)
    <span class="k">if</span> err <span class="o">!=</span> <span class="n">nil</span> {
        <span class="f">HandleError</span>(http.StatusInternalServerError, c, err)
        <span class="k">return</span>
    }

    <span class="c">// 获取总用户数</span>
    <span class="v">total</span>, <span class="v">err</span> <span class="a">:=</span> model.<span class="f">GetUserListTotal</span>(<span class="n">nil</span>)
    <span class="k">if</span> err <span class="o">!=</span> <span class="n">nil</span> {
        <span class="f">HandleError</span>(http.StatusInternalServerError, c, err)
        <span class="k">return</span>
    }

    <span class="c">// 去除密码</span>
    <span class="k">for</span> <span class="v">i</span> <span class="a">:=</span> <span class="k">range</span> users {
        users[i].<span class="v">Password</span> <span class="a">=</span> <span class="s">&quot;&quot;</span>
    }

    c.<span class="f">JSON</span>(http.StatusOK, ListResponse{
        Status:  <span class="s">&quot;ok&quot;</span>,
        Message: <span class="s">&quot;success&quot;</span>,
        Data:    users,
        Total:   total,
    })
}

<span class="c">// @Summary Put user</span>
<span class="c">// @Description Put user</span>
<span class="c">// @Tags user</span>
<span class="c">// @Produce json</span>
<span class="c">// @Param Authorization header string true &quot;Authorization token&quot;</span>
<span class="c">// @Param reqData body routes.UserRequestData true &quot;reqData body&quot;</span>
<span class="c">// @Success 200 json string Response</span>
<span class="c">// @Failure 400 json string Response</span>
<span class="c">// @Router /users [put]</span>
<span class="k">func</span> <span class="d">PutUser</span>(c <span class="k">*</span>gin.Context) {
    <span class="c">// 绑定请求数据</span>
    <span class="k">var</span> <span class="v">reqData</span> UserRequestData
    <span class="k">if</span> <span class="v">err</span> <span class="a">:=</span> c.<span class="f">ShouldBindJSON</span>(<span class="k">&amp;</span>reqData); err <span class="o">!=</span> <span class="n">nil</span> {
        <span class="f">HandleError</span>(http.StatusBadRequest, c, err)
        <span class="k">return</span>
    }

    <span class="c">// 默认为正常用户</span>
    <span class="k">if</span> reqData.Role <span class="o">==</span> <span class="s">&quot;&quot;</span> {
        <span class="v">reqData.Role</span> <span class="a">=</span> constants.RoleNormal
    }

    <span class="c">// UserId</span>
    <span class="v">uid</span> <span class="a">:=</span> services.<span class="f">GetCurrentUserId</span>(c)

    <span class="c">// 空 UserId 处理</span>
    <span class="k">if</span> uid <span class="o">==</span> <span class="s">&quot;&quot;</span> {
        <span class="v">uid</span> <span class="a">=</span> bson.<span class="f">ObjectIdHex</span>(constants.ObjectIdNull)
    }

    <span class="c">// 添加用户</span>
    <span class="k">if</span> <span class="v">err</span> <span class="a">:=</span> services.<span class="f">CreateNewUser</span>(reqData.Username, reqData.Password, reqData.Role, reqData.Email, uid); err <span class="o">!=</span> <span class="n">nil</span> {
        <span class="f">HandleError</span>(http.StatusInternalServerError, c, err)
        <span class="k">return</span>
    }

    c.<span class="f">JSON</span>(http.StatusOK, Response{
        Status:  <span class="s">&quot;ok&quot;</span>,
        Message: <span class="s">&quot;success&quot;</span>,
    })
}

<span class="c">// @Summary Post user</span>
<span class="c">// @Description Post user</span>
<span class="c">// @Tags user</span>
<span class="c">// @Produce json</span>
<span class="c">// @Param Authorization header string true &quot;Authorization token&quot;</span>
<span class="c">// @Param item body model.User true &quot;user body&quot;</span>
<span class="c">// @Param id path string true &quot;user id&quot;</span>
<span class="c">// @Success 200 json string Response</span>
<span class="c">// @Failure 400 json string Response</span>
<span class="c">// @Router /users/{id} [post]</span>
<span class="k">func</span> <span class="d">PostUser</span>(c <span class="k">*</span>gin.Context) {
    <span class="v">id</span> <span class="a">:=</span> c.<span class="f">Param</span>(<span class="s">&quot;id&quot;</span>)

    <span class="k">if</span> <span class="o">!</span>bson.<span class="f">IsObjectIdHex</span>(id) {
        <span class="f">HandleErrorF</span>(http.StatusBadRequest, c, <span class="s">&quot;invalid id&quot;</span>)
        <span class="k">return</span>
    }

    <span class="k">var</span> <span class="v">item</span> model.User
    <span class="k">if</span> <span class="v">err</span> <span class="a">:=</span> c.<span class="f">ShouldBindJSON</span>(<span class="k">&amp;</span>item); err <span class="o">!=</span> <span class="n">nil</span> {
        <span class="f">HandleError</span>(http.StatusBadRequest, c, err)
        <span class="k">return</span>
    }

    <span class="k">if</span> item.UserId.<span class="f">Hex</span>() <span class="o">==</span> <span class="s">&quot;&quot;</span> {
        <span class="v">item.UserId</span> <span class="a">=</span> bson.<span class="f">ObjectIdHex</span>(constants.ObjectIdNull)
    }

    <span class="k">if</span> <span class="v">err</span> <span class="a">:=</span> model.<span class="f">UpdateUser</span>(bson.<span class="f">ObjectIdHex</span>(id), item); err <span class="o">!=</span> <span class="n">nil</span> {
        <span class="f">HandleError</span>(http.StatusInternalServerError, c, err)
        <span class="k">return</span>
    }

    c.<span class="f">JSON</span>(http.StatusOK, Response{
        Status:  <span class="s">&quot;ok&quot;</span>,
        Message: <span class="s">&quot;success&quot;</span>,
    })
}

<span class="c">// @Summary Delete user</span>
<span class="c">// @Description Delete user</span>
<span class="c">// @Tags user</span>
<span class="c">// @Produce json</span>
<span class="c">// @Param Authorization header string true &quot;Authorization token&quot;</span>
<span class="c">// @Param id path string true &quot;user id&quot;</span>
<span class="c">// @Success 200 json string Response</span>
<span class="c">// @Failure 400 json string Response</span>
<span class="c">// @Router /users/{id} [delete]</span>
<span class="k">func</span> <span class="d">DeleteUser</span>(c <span class="k">*</span>gin.Context) {
    <span class="v">id</span> <span class="a">:=</span> c.<span class="f">Param</span>(<span class="s">&quot;id&quot;</span>)

    <span class="k">if</span> <span class="o">!</span>bson.<span class="f">IsObjectIdHex</span>(id) {
        <span class="f">HandleErrorF</span>(http.StatusBadRequest, c, <span class="s">&quot;invalid id&quot;</span>)
        <span class="k">return</span>
    }

    <span class="c">// 从数据库中删除该用户</span>
    <span class="k">if</span> <span class="v">err</span> <span class="a">:=</span> model.<span class="f">RemoveUser</span>(bson.<span class="f">ObjectIdHex</span>(id)); err <span class="o">!=</span> <span class="n">nil</span> {
        <span class="f">HandleError</span>(http.StatusInternalServerError, c, err)
        <span class="k">return</span>
    }

    c.<span class="f">JSON</span>(http.StatusOK, Response{
        Status:  <span class="s">&quot;ok&quot;</span>,
        Message: <span class="s">&quot;success&quot;</span>,
    })
}

<span class="k">func</span> <span class="d">Login</span>(c <span class="k">*</span>gin.Context) {
    <span class="c">// 绑定请求数据</span>
    <span class="k">var</span> <span class="v">reqData</span> UserRequestData
    <span class="k">if</span> <span class="v">err</span> <span class="a">:=</span> c.<span class="f">ShouldBindJSON</span>(<span class="k">&amp;</span>reqData); err <span class="o">!=</span> <span class="n">nil</span> {
        <span class="f">HandleError</span>(http.StatusUnauthorized, c, errors.<span class="f">New</span>(<span class="s">&quot;not authorized&quot;</span>))
        <span class="k">return</span>
    }

    <span class="c">// 获取用户</span>
    <span class="v">user</span>, <span class="v">err</span> <span class="a">:=</span> model.<span class="f">GetUserByUsername</span>(strings.<span class="f">ToLower</span>(reqData.Username))
    <span class="k">if</span> err <span class="o">!=</span> <span class="n">nil</span> {
        <span class="f">HandleError</span>(http.StatusUnauthorized, c, errors.<span class="f">New</span>(<span class="s">&quot;not authorized&quot;</span>))
        <span class="k">return</span>
    }

    <span class="c">// 校验密码</span>
    <span class="v">encPassword</span> <span class="a">:=</span> utils.<span class="f">EncryptPassword</span>(reqData.Password)
    <span class="k">if</span> user.Password <span class="o">!=</span> encPassword {
        <span class="f">HandleError</span>(http.StatusUnauthorized, c, errors.<span class="f">New</span>(<span class="s">&quot;not authorized&quot;</span>))
        <span class="k">return</span>
    }

    <span class="c">// 获取token</span>
    <span class="v">tokenStr</span>, <span class="v">err</span> <span class="a">:=</span> services.<span class="f">MakeToken</span>(<span class="k">&amp;</span>user)
    <span class="k">if</span> err <span class="o">!=</span> <span class="n">nil</span> {
        <span class="f">HandleError</span>(http.StatusUnauthorized, c, errors.<span class="f">New</span>(<span class="s">&quot;not authorized&quot;</span>))
        <span class="k">return</span>
    }

    c.<span class="f">JSON</span>(http.StatusOK, Response{
        Status:  <span class="s">&quot;ok&quot;</span>,
        Message: <span class="s">&quot;success&quot;</span>,
        Data:    tokenStr,
    })
}

<span class="k">func</span> <span class="d">GetMe</span>(c <span class="k">*</span>gin.Context) {
    <span class="v">ctx</span> <span class="a">:=</span> context.<span class="f">WithGinContext</span>(c)
    <span class="v">user</span> <span class="a">:=</span> ctx.<span class="f">User</span>()
    <span class="k">if</span> user <span class="o">==</span> <span class="n">nil</span> {
        ctx.<span class="f">FailedWithError</span>(constants.ErrorUserNotFound, http.StatusUnauthorized)
        <span class="k">return</span>
    }
    ctx.<span class="f">Success</span>(<span class="k">struct</span> {
        <span class="k">*</span>model.User
        Password <span class="k">string</span> <span class="s">`json:&quot;password,omitempty&quot;`</span>
    }{
        User: user,
    }, <span class="n">nil</span>)
}

<span class="k">func</span> <span class="d">PostMe</span>(c <span class="k">*</span>gin.Context) {
    <span class="v">ctx</span> <span class="a">:=</span> context.<span class="f">WithGinContext</span>(c)
    <span class="v">user</span> <span class="a">:=</span> ctx.<span class="f">User</span>()
    <span class="k">if</span> user <span class="o">==</span> <span class="n">nil</span> {
        ctx.<span class="f">FailedWithError</span>(constants.ErrorUserNotFound, http.StatusUnauthorized)
        <span class="k">return</span>
    }
    <span class="k">var</span> <span class="v">reqBody</span> model.User
    <span class="k">if</span> <span class="v">err</span> <span class="a">:=</span> c.<span class="f">ShouldBindJSON</span>(<span class="k">&amp;</span>reqBody); err <span class="o">!=</span> <span class="n">nil</span> {
        <span class="f">HandleErrorF</span>(http.StatusBadRequest, c, <span class="s">&quot;invalid request&quot;</span>)
        <span class="k">return</span>
    }
    <span class="k">if</span> reqBody.Email <span class="o">!=</span> <span class="s">&quot;&quot;</span> {
        <span class="v">user.Email</span> <span class="a">=</span> reqBody.Email
    }
    <span class="k">if</span> reqBody.Setting.NotificationTrigger <span class="o">!=</span> <span class="s">&quot;&quot;</span> {
        <span class="v">user.Setting.NotificationTrigger</span> <span class="a">=</span> reqBody.Setting.NotificationTrigger
    }
    <span class="k">if</span> reqBody.Setting.DingTalkRobotWebhook <span class="o">!=</span> <span class="s">&quot;&quot;</span> {
        <span class="v">user.Setting.DingTalkRobotWebhook</span> <span class="a">=</span> reqBody.Setting.DingTalkRobotWebhook
    }
    <span class="k">if</span> reqBody.Setting.WechatRobotWebhook <span class="o">!=</span> <span class="s">&quot;&quot;</span> {
        <span class="v">user.Setting.WechatRobotWebhook</span> <span class="a">=</span> reqBody.Setting.WechatRobotWebhook
    }
    <span class="v">user.Setting.EnabledNotifications</span> <span class="a">=</span> reqBody.Setting.EnabledNotifications
    <span class="v">user.Setting.ErrorRegexPattern</span> <span class="a">=</span> reqBody.Setting.ErrorRegexPattern
    <span class="k">if</span> reqBody.Setting.MaxErrorLog <span class="o">!=</span> <span class="n">0</span> {
        <span class="v">user.Setting.MaxErrorLog</span> <span class="a">=</span> reqBody.Setting.MaxErrorLog
    }
    <span class="v">user.Setting.LogExpireDuration</span> <span class="a">=</span> reqBody.Setting.LogExpireDuration

    <span class="k">if</span> user.UserId.<span class="f">Hex</span>() <span class="o">==</span> <span class="s">&quot;&quot;</span> {
        <span class="v">user.UserId</span> <span class="a">=</span> bson.<span class="f">ObjectIdHex</span>(constants.ObjectIdNull)
    }

    <span class="k">if</span> <span class="v">err</span> <span class="a">:=</span> user.<span class="f">Save</span>(); err <span class="o">!=</span> <span class="n">nil</span> {
        <span class="f">HandleError</span>(http.StatusInternalServerError, c, err)
        <span class="k">return</span>
    }
    c.<span class="f">JSON</span>(http.StatusOK, Response{
        Status:  <span class="s">&quot;ok&quot;</span>,
        Message: <span class="s">&quot;success&quot;</span>,
    })
}

<span class="k">func</span> <span class="d">PostMeChangePassword</span>(c <span class="k">*</span>gin.Context) {
    <span class="v">ctx</span> <span class="a">:=</span> context.<span class="f">WithGinContext</span>(c)
    <span class="v">user</span> <span class="a">:=</span> ctx.<span class="f">User</span>()
    <span class="k">if</span> user <span class="o">==</span> <span class="n">nil</span> {
        ctx.<span class="f">FailedWithError</span>(constants.ErrorUserNotFound, http.StatusUnauthorized)
        <span class="k">return</span>
    }
    <span class="k">var</span> <span class="v">reqBody</span> model.User
    <span class="k">if</span> <span class="v">err</span> <span class="a">:=</span> c.<span class="f">ShouldBindJSON</span>(<span class="k">&amp;</span>reqBody); err <span class="o">!=</span> <span class="n">nil</span> {
        <span class="f">HandleErrorF</span>(http.StatusBadRequest, c, <span class="s">&quot;invalid request&quot;</span>)
        <span class="k">return</span>
    }
    <span class="k">if</span> reqBody.Password <span class="o">==</span> <span class="s">&quot;&quot;</span> {
        <span class="f">HandleErrorF</span>(http.StatusBadRequest, c, <span class="s">&quot;password is empty&quot;</span>)
        <span class="k">return</span>
    }
    <span class="k">if</span> user.UserId.<span class="f">Hex</span>() <span class="o">==</span> <span class="s">&quot;&quot;</span> {
        <span class="v">user.UserId</span> <span class="a">=</span> bson.<span class="f">ObjectIdHex</span>(constants.ObjectIdNull)
    }
    <span class="v">user.Password</span> <span class="a">=</span> utils.<span class="f">EncryptPassword</span>(reqBody.Password)
    <span class="k">if</span> <span class="v">err</span> <span class="a">:=</span> user.<span class="f">Save</span>(); err <span class="o">!=</span> <span class="n">nil</span> {
        <span class="f">HandleError</span>(http.StatusInternalServerError, c, err)
        <span class="k">return</span>
    }
    c.<span class="f">JSON</span>(http.StatusOK, Response{
        Status:  <span class="s">&quot;ok&quot;</span>,
        Message: <span class="s">&quot;success&quot;</span>,
    })
}</div>
</div>
<div class="abs" style="left:3330px;top:592px;width:14px;height:4px;background:#d08e38"></div>
<!-- vertical scrollbar -->
<div class="abs" style="left:3550px;top:136px;width:34px;height:2050px;box-sizing:border-box;border-left:1px solid #464b54;border-top:1px solid #464b54"></div>
<div class="abs" style="left:3296px;top:136px;width:16px;height:2022px;background:linear-gradient(90deg,rgba(24,26,31,0),rgba(24,26,31,0.25))"></div>
<div class="abs" style="left:3551px;top:686px;width:33px;height:250px;background:rgba(78,86,102,0.45)"></div>
<div class="abs" style="left:3551px;top:736px;width:33px;height:4px;background:#4d78cc"></div>
<div class="abs" style="left:3561px;top:734px;width:13px;height:14px;background:rgba(209,154,102,0.4)"></div>
<!-- horizontal scrollbar -->
<div class="abs" style="left:1220px;top:2158px;width:2051px;height:28px;background:rgba(78,86,102,0.38)"></div>

<!-- STATUS BAR -->
<div id="status"></div>
<div class="abs" style="left:0;top:2186px;width:82px;height:54px;background:#4d78cc"></div>
<svg class="abs" style="left:0;top:0" width="3584" height="2240" fill="none" stroke="#9da5b4" stroke-width="2.2">
 <path d="M31 2205.5 L40.2 2214.7 L31 2224 M50 2197 L41.4 2206 L50 2215" stroke="#ffffff"/>
 <path d="M241 2198 H248 L242 2209 H248 L233 2228 L237 2213 H231 Z" stroke-width="2"/>
 <circle cx="309.5" cy="2213" r="13.5"/>
 <path d="M304 2207.5 L315 2218.5 M315 2207.5 L304 2218.5"/>
 <path d="M376.5 2198 L391 2226 H362 Z"/>
 <path d="M376.5 2207 V2217 M376.5 2220 V2222.5"/>
 <path d="M470.5 2202 L482 2208.5 V2221.5 L470.5 2228 L459 2221.5 V2208.5 Z M465 2207 L476 2215 L465 2223 Z"/>
 <path d="M3111.5 2197 L3126 2225 H3097 Z"/>
 <path d="M3111.5 2206 V2216 M3111.5 2219 V2221.5"/>
 <circle cx="3451" cy="2208" r="6"/>
 <path d="M3440 2227 Q3442 2216 3451 2216 Q3458 2216 3461 2221 M3457 2197 H3473 V2211 H3466 L3461 2215 V2211"/>
 <path d="M3518 2222 H3542 L3539 2218 V2209 Q3539 2198 3530 2198 Q3521 2198 3521 2209 V2218 Z M3527 2225 Q3530 2229 3533 2225"/>
</svg>
<div class="sb" style="left:102px;letter-spacing:-0.9px">Go 1.16.6</div>
<div class="sb" style="left:335px">0</div>
<div class="sb" style="left:402px">0</div>
<div class="sb" style="left:493px">tabnine</div>
<div class="sb" style="left:2266px">行 115，列 13 (已选择7)</div>
<div class="sb" style="left:2612px">制表符长度: 4</div>
<div class="sb" style="left:2829px">UTF-8</div>
<div class="sb" style="left:2952px">LF</div>
<div class="sb" style="left:3023px">go</div>
<div class="sb" style="left:3137px">Go Update Available</div>

</body></html>
